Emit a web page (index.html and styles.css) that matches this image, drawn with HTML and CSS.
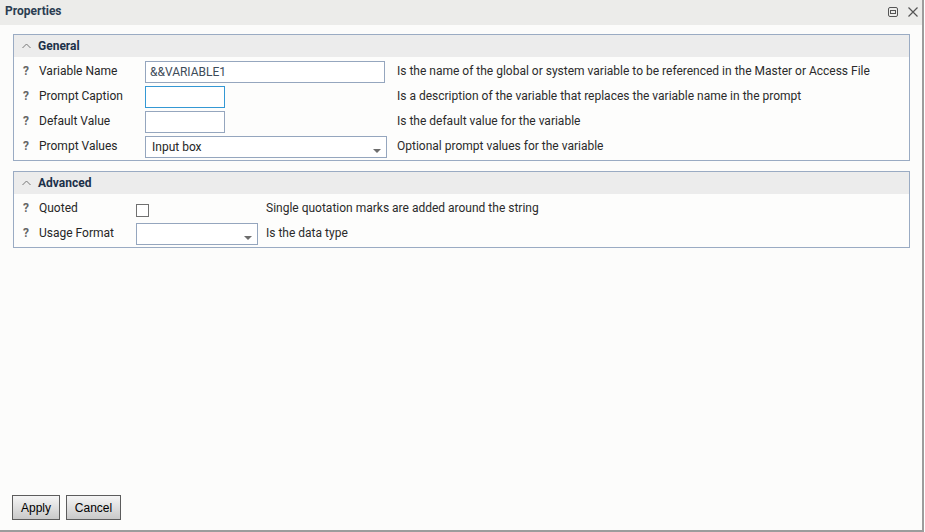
FILE: index.html
```html
<!DOCTYPE html>
<html>
<head>
<meta charset="utf-8">
<link rel="stylesheet" href="styles.css">
</head>
<body>
<div class="window">
  <div class="titlebar">
    <span class="title">Properties</span>
    <span class="tools">
      <svg class="ico" width="10" height="10" viewBox="0 0 10 10"><rect x="0.5" y="0.5" width="9" height="9" rx="1.5" fill="none" stroke="#555" stroke-width="1"/><rect x="2.5" y="3.5" width="5" height="3" fill="none" stroke="#555" stroke-width="1"/></svg>
      <svg class="ico" width="10" height="10" viewBox="0 0 10 10"><path d="M0.5 0.5 L9.5 9.5 M9.5 0.5 L0.5 9.5" stroke="#555" stroke-width="1.2" fill="none"/></svg>
    </span>
  </div>
  <div class="content">
    <div class="panel">
      <div class="phead"><svg class="caret" width="9" height="6" viewBox="0 0 9 6"><polyline points="0.5,5 4.5,1 8.5,5" fill="none" stroke="#777" stroke-width="1"/></svg><span>General</span></div>
      <div class="pbody">
        <div class="row gen">
          <span class="q">?</span><span class="lbl">Variable Name</span>
          <span class="ctl"><span class="input wide">&amp;&amp;VARIABLE1</span></span>
          <span class="desc">Is the name of the global or system variable to be referenced in the Master or Access File</span>
        </div>
        <div class="row gen">
          <span class="q">?</span><span class="lbl">Prompt Caption</span>
          <span class="ctl"><span class="input short focus"></span></span>
          <span class="desc">Is a description of the variable that replaces the variable name in the prompt</span>
        </div>
        <div class="row gen">
          <span class="q">?</span><span class="lbl">Default Value</span>
          <span class="ctl"><span class="input short"></span></span>
          <span class="desc">Is the default value for the variable</span>
        </div>
        <div class="row gen">
          <span class="q">?</span><span class="lbl">Prompt Values</span>
          <span class="ctl"><span class="select selwide">Input box<span class="arrow"></span></span></span>
          <span class="desc">Optional prompt values for the variable</span>
        </div>
      </div>
    </div>
    <div class="panel">
      <div class="phead"><svg class="caret" width="9" height="6" viewBox="0 0 9 6"><polyline points="0.5,5 4.5,1 8.5,5" fill="none" stroke="#777" stroke-width="1"/></svg><span>Advanced</span></div>
      <div class="pbody">
        <div class="row adv">
          <span class="q">?</span><span class="lbl">Quoted</span>
          <span class="ctl"><span class="check"></span></span>
          <span class="desc">Single quotation marks are added around the string</span>
        </div>
        <div class="row adv">
          <span class="q">?</span><span class="lbl">Usage Format</span>
          <span class="ctl"><span class="select selmid"><span class="arrow"></span></span></span>
          <span class="desc">Is the data type</span>
        </div>
      </div>
    </div>
  </div>
  <div class="buttons">
    <button class="btn apply">Apply</button>
    <button class="btn cancel">Cancel</button>
  </div>
</div>
</body>
</html>
```

FILE: styles.css
```css
html, body {
  margin: 0;
  padding: 0;
  background: #ffffff;
}
body {
  font-family: Roboto, "Liberation Sans", Arial, sans-serif;
  font-size: 12px;
  color: #2a2a2a;
}
.window {
  width: 922px;
  height: 530px;
  border-right: 2px solid #9c9c9c;
  border-bottom: 2px solid #9c9c9c;
  background: #fcfcfb;
  display: flex;
  flex-direction: column;
}
.titlebar {
  height: 25px;
  background: #ececea;
  display: flex;
  align-items: center;
  justify-content: space-between;
  padding: 0 4px 0 5px;
  box-sizing: border-box;
}
.title {
  font-weight: bold;
  color: #2b3d51;
  font-size: 12px;
  margin-top: -3px;
}
.tools {
  display: flex;
  gap: 10px;
  align-items: center;
  margin-top: -1px;
}
.ico { display: block; }
.content {
  flex: 1;
  padding: 9px 12px 0 13px;
  display: flex;
  flex-direction: column;
  gap: 10px;
}
.panel {
  border: 1px solid #9aabc3;
  background: #fdfdfc;
}
.phead {
  height: 22px;
  background: #ececec;
  display: flex;
  align-items: center;
  font-weight: bold;
  color: #1c3149;
}
.caret {
  margin-left: 8px;
  margin-right: 7px;
  display: block;
}
.pbody {
  padding: 2px 0 1px 0;
}
.row {
  height: 25px;
  display: flex;
  align-items: center;
}
.row > span { line-height: 14px; }
.q, .lbl, .desc { margin-top: -1px; }
.q {
  width: 16px;
  margin-left: 9px;
  font-weight: bold;
  color: #666;
  font-size: 12px;
}
.gen .lbl { width: 106px; }
.adv .lbl { width: 97px; }
.lbl { color: #262626; }
.gen .ctl { width: 252px; }
.adv .ctl { width: 130px; }
.ctl { display: flex; align-items: center; }
.desc { color: #2b2b2b; }
.input, .select {
  box-sizing: border-box;
  height: 22px;
  border: 1px solid #95a6be;
  background: #fff;
  display: flex;
  align-items: center;
  padding-left: 4px;
  color: #3d4b59;
  position: relative;
}
.wide { width: 240px; }
.short { width: 80px; }
.focus { border-color: #3498d4; }
.selwide { width: 242px; padding-left: 6px; color: #262626; }
.selmid { width: 122px; }
.arrow {
  position: absolute;
  right: 5px;
  top: 12px;
  width: 0;
  height: 0;
  border-left: 4px solid transparent;
  border-right: 4px solid transparent;
  border-top: 4px solid #6d6d6d;
}
.check {
  width: 13px;
  height: 13px;
  box-sizing: border-box;
  border: 1px solid #707070;
  background: #fff;
  margin-top: 3px;
}
.buttons {
  padding: 0 0 10px 12px;
  display: flex;
  gap: 6px;
}
.btn {
  height: 25px;
  box-sizing: border-box;
  border: 1px solid #5c5c5c;
  background: linear-gradient(#f5f5f5, #c9c9c9);
  font-family: "Liberation Sans", Arial, sans-serif;
  font-size: 12px;
  color: #000;
  padding: 0;
  border-radius: 0;
}
.apply { width: 48px; }
.cancel { width: 55px; }
```
